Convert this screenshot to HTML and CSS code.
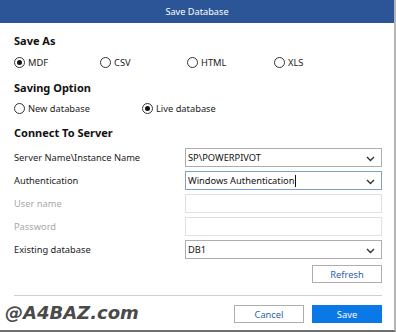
FILE: index.html
```html
<!DOCTYPE html>
<html lang="en">
<head>
    <meta charset="UTF-8">
    <meta name="viewport" content="width=device-width, initial-scale=1.0">
    <title>Save Database</title>
    <link rel="stylesheet" href="styles.css">
</head>
<body>

    <div class="dialog">
        <div class="title-bar">Save Database</div>

        <div class="content">
            <h2 class="section">Save As</h2>
            <div class="radio-row formats">
                <label class="radio checked"><span class="dot"></span>MDF</label>
                <label class="radio"><span class="dot"></span>CSV</label>
                <label class="radio"><span class="dot"></span>HTML</label>
                <label class="radio"><span class="dot"></span>XLS</label>
            </div>

            <h2 class="section">Saving Option</h2>
            <div class="radio-row options">
                <label class="radio"><span class="dot"></span>New database</label>
                <label class="radio checked"><span class="dot"></span>Live database</label>
            </div>

            <h2 class="section">Connect To Server</h2>
            <div class="form">
                <span class="label">Server Name\Instance Name</span>
                <div class="field select">SP\POWERPIVOT
                    <svg class="chevron" width="9" height="6" viewBox="0 0 9 6"><path d="M1 1l3.5 3.5L8 1" fill="none" stroke="#333" stroke-width="1.4"/></svg>
                </div>

                <span class="label">Authentication</span>
                <div class="field select focused">Windows Authentication<span class="caret"></span>
                    <svg class="chevron" width="9" height="6" viewBox="0 0 9 6"><path d="M1 1l3.5 3.5L8 1" fill="none" stroke="#333" stroke-width="1.4"/></svg>
                </div>

                <span class="label disabled">User name</span>
                <div class="field input-off"></div>

                <span class="label disabled">Password</span>
                <div class="field input-off"></div>

                <span class="label">Existing database</span>
                <div class="field select">DB1
                    <svg class="chevron" width="9" height="6" viewBox="0 0 9 6"><path d="M1 1l3.5 3.5L8 1" fill="none" stroke="#333" stroke-width="1.4"/></svg>
                </div>
            </div>

            <div class="refresh-row">
                <button class="btn">Refresh</button>
            </div>

            <div class="footer">
                <button class="btn">Cancel</button>
                <button class="btn primary">Save</button>
            </div>
        </div>

        <div class="watermark">@A4BAZ.com</div>
    </div>

</body>
</html>
```

FILE: styles.css
```css
body { margin: 0; background: #fff; font-family: "Noto Sans", "Open Sans", sans-serif; font-size: 9.3px; color: #222; }
.dialog { position: relative; width: 394px; height: 330px; border-right: 2px solid #b5b5b5; border-bottom: 2px solid #6f6f6f; background: #fff; box-sizing: content-box; }
.title-bar { height: 23px; line-height: 23px; background: #2c5597; color: #fff; text-align: center; font-size: 9.2px; }
.content { padding: 10px 12px 0 14px; }

.section { margin: 0; font-size: 11px; font-weight: bold; line-height: 16px; color: #111; }

.radio-row { display: grid; height: 18px; align-items: center; margin: 4px 0 9px; }
.formats { grid-template-columns: 86px 87px 87px 87px; }
.options { grid-template-columns: 128px 128px; margin: 3px 0 8px; }
.radio { display: flex; align-items: center; gap: 3px; color: #222; }
.dot { width: 9px; height: 9px; border: 1px solid #333; border-radius: 50%; display: flex; align-items: center; justify-content: center; background: #fff; }
.checked .dot::after { content: ""; width: 5px; height: 5px; border-radius: 50%; background: #111; }

.form { display: grid; grid-template-columns: 171px 197px; row-gap: 4px; margin-top: 7px; align-items: center; }
.label { color: #222; }
.label.disabled { color: #a8a8a8; }
.field { position: relative; height: 19px; box-sizing: border-box; border: 1px solid #adadad; padding-left: 2px; display: flex; align-items: center; color: #111; }
.field.focused { border-color: #7aa0d6; }
.input-off { border-color: #e0e0e0; }
.chevron { position: absolute; right: 6px; top: 7px; }
.caret { display: inline-block; width: 1px; height: 12px; background: #111; margin-left: 1px; }

.refresh-row { display: flex; justify-content: flex-end; margin-top: 6px; padding-bottom: 12px; border-bottom: 1px solid #cfcfcf; }
.btn { width: 70px; height: 18px; border: 1px solid #adadad; background: #fff; color: #2c62b0; font-family: "Noto Sans", "Open Sans", sans-serif; font-size: 9.3px; padding: 0; }
.footer { display: flex; justify-content: flex-end; gap: 8px; margin-top: 9px; }
.btn.primary { background: #0a78e6; border-color: #0a78e6; color: #fff; }

.watermark { position: absolute; left: 5px; top: 302px; font-family: "DejaVu Sans", sans-serif; font-style: italic; font-size: 18px; font-weight: bold; color: #4a4a4a; }
```
